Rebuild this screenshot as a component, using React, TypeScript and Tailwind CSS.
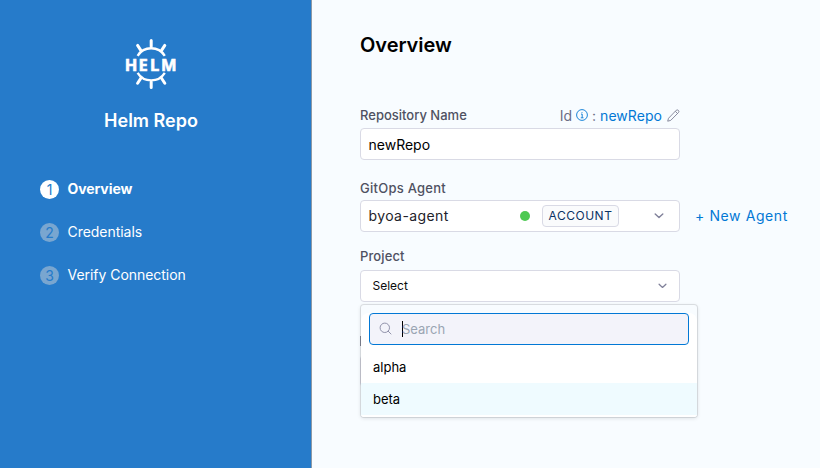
import React from "react";

const steps = [
  { n: 1, label: "Overview", active: true },
  { n: 2, label: "Credentials", active: false },
  { n: 3, label: "Verify Connection", active: false },
];

function HelmLogo() {
  return (
    <svg width="52" height="52" viewBox="0 0 52 52" fill="none" stroke="#fff" strokeLinecap="round">
      <path d="M12.6 17.8A16 16 0 0 1 39.8 17.8M12.6 34.8A16 16 0 0 0 39.8 34.8" strokeWidth="2.3" strokeLinecap="butt" />
      <path d="M26.2 2.6V8.5M26.2 44V49.4M12.6 7.4L16 12.6M39.8 7.4L36.4 12.6M12.6 45.2L16 40M39.8 45.2L36.4 40" strokeWidth="3" />
      <text x="-0.2 13.6 25 36" y="32.6" stroke="#fff" strokeWidth="0.6" fill="#fff" className="font-['Noto_Sans',sans-serif] text-[16.5px] font-bold">HELM</text>
    </svg>
  );
}

function Chevron({ size = 10 }: { size?: number }) {
  return (
    <svg width={size} height="6" viewBox="0 0 10 6" fill="none" stroke="#80819a" strokeWidth="1.4" strokeLinecap="round" strokeLinejoin="round">
      <path d="M1.2 1L5 4.6L8.8 1" />
    </svg>
  );
}

function Sidebar() {
  return (
    <aside className="flex w-[312px] shrink-0 flex-col border-r border-[#8d99a6] bg-[#267bca] text-white">
      <div className="flex flex-col items-center pt-[38px] pr-[9px]">
        <HelmLogo />
        <h1 className="mt-[19px] text-[18px] leading-6 font-semibold">Helm Repo</h1>
      </div>
      <ol className="mt-[46px] flex flex-col gap-[23px] pl-10">
        {steps.map((s) => (
          <li key={s.n} className="flex h-5 items-center gap-2">
            <span className={s.active ? "flex size-[19px] items-center justify-center rounded-full bg-white text-[14px] text-[#267bca]" : "flex size-[19px] items-center justify-center rounded-full bg-[#79a6d0] text-[14px] text-[#267bca]"}>
              {s.n}
            </span>
            <span className={s.active ? "pb-0.5 pl-[0.5px] text-[14px] font-bold tracking-[-0.08px]" : "pb-0.5 pl-[0.5px] text-[14px] tracking-[-0.04px]"}>{s.label}</span>
          </li>
        ))}
      </ol>
    </aside>
  );
}

export default function App() {
  return (
    <div className="flex h-[468px] w-[820px] overflow-hidden bg-[#f8fcff] font-['Inter',sans-serif] text-black">
      <Sidebar />
      <main className="flex-1 pt-[31px] pl-12">
        <h2 className="text-[20px] leading-7 font-semibold tracking-[-0.05px]">Overview</h2>

        <section className="mt-[47px] w-80">
          <div className="flex h-[18px] items-center justify-between">
            <label className="pt-0.5 text-[13px] font-medium text-[#4f5162]">Repository Name</label>
            <div className="flex items-center text-[14px] text-[#6b6d85]">
              <span>Id</span>
              <svg className="mr-1 ml-1" width="12" height="12" viewBox="0 0 12 12" fill="none" stroke="#0278d5">
                <circle cx="6" cy="6" r="5.4" strokeWidth="0.9" />
                <path d="M5 5.1H6.2V8.7M4.8 8.8H7.5M6 3V3.8" strokeWidth="0.9" />
              </svg>
              <span className="mr-1">:</span>
              <span className="tracking-[0.05px] text-[#0278d5]">newRepo</span>
              <svg className="ml-[5px]" width="13" height="13" viewBox="0 0 13 13" fill="none" stroke="#7d7f94" strokeWidth="0.9" strokeLinejoin="round">
                <path d="M0.7 12.2L1.5 9.3L9.2 1.3Q10.3 0.4 11.4 1.4Q12.4 2.5 11.5 3.5L3.7 11.4Z" />
                <path d="M8.3 2.3L10.5 4.5" />
              </svg>
            </div>
          </div>
          <div className="mt-1 flex h-8 items-center rounded-[4px] border border-[#d9dae5] bg-white px-[7.5px] text-[14px]">newRepo</div>
        </section>

        <section className="mt-[19px]">
          <label className="block text-[13px] leading-[18px] font-medium tracking-[0.25px] text-[#4f5162]">GitOps Agent</label>
          <div className="mt-[3px] flex items-center">
            <div className="flex h-8 w-80 items-center rounded-[4px] border border-[#d9dae5] bg-white pr-[15px] pl-[7.5px]">
              <span className="pb-0.5 text-[14px] tracking-[0.4px] text-[#22222a]">byoa-agent</span>
              <span className="ml-auto size-[10px] rounded-full bg-[#4dc952]" />
              <span className="mr-[35px] ml-3 flex h-[22px] w-[77px] items-center justify-center rounded-[4px] border border-[#d9dae5] bg-[#fafbfc] text-[12px] tracking-[0.5px] text-[#0a3364]">ACCOUNT</span>
              <Chevron />
            </div>
            <span className="ml-[15px] pb-0.5 text-[14px] tracking-[0.6px] text-[#0278d5]">+ New Agent</span>
          </div>
        </section>

        <section className="relative mt-[15px] w-80">
          <label className="block text-[13px] leading-[18px] font-medium tracking-[0.1px] text-[#4f5162]">Project</label>
          <div className="mt-[5px] flex h-8 items-center justify-between rounded-[4px] border border-[#d9dae5] bg-white pr-3 pl-[11.5px] text-[12px] text-[#0b0b0d]">
            Select
            <Chevron size={9} />
          </div>
          {/* edges of the field beneath the open menu */}
          <div className="mt-[34px] h-[10px] w-px bg-[#8b8d9d]" />
          <div className="mt-[9px] h-8 rounded-[4px] border border-[#d9dae5] bg-white" />

          <div className="absolute top-[58px] left-px w-[336px] overflow-hidden rounded-[3px] bg-[#f8fcff] pt-2 shadow-[0_0_0_1px_rgba(16,22,26,0.1),0_1px_4px_rgba(16,22,26,0.14)]">
            <div className="rounded-t-[8px] bg-white pb-0.5">
              <div className="mx-2 flex h-8 items-center rounded-[4px] border border-[#0278d5] bg-[#f3f3fa] pl-[9px] text-[13px] text-[#9aa5b3]">
                <svg className="mb-0.5" width="13" height="13" viewBox="0 0 13 13" fill="none" stroke="#9293ab">
                  <circle cx="5.8" cy="5.8" r="4.7" />
                  <path d="M9.2 9.2L12 12" strokeLinecap="round" />
                </svg>
                <span className="ml-2.5 h-4 w-px bg-black" />
                <span className="-ml-px pt-0.5">Search</span>
              </div>
              <ul className="mt-1.5 text-[13px] leading-8">
                <li className="h-8 px-3">alpha</li>
                <li className="h-8 bg-[#effbff] px-3">beta</li>
              </ul>
            </div>
          </div>
        </section>
      </main>
    </div>
  );
}
